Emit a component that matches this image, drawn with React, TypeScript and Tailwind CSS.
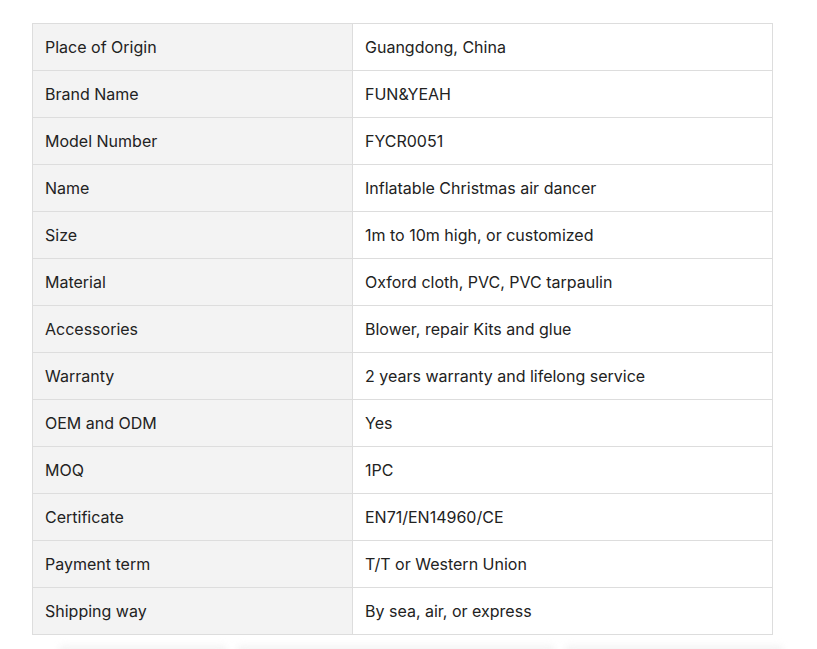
const rows: [string, string][] = [
  ["Place of Origin", "Guangdong, China"],
  ["Brand Name", "FUN&YEAH"],
  ["Model Number", "FYCR0051"],
  ["Name", "Inflatable Christmas air dancer"],
  ["Size", "1m to 10m high, or customized"],
  ["Material", "Oxford cloth, PVC, PVC tarpaulin"],
  ["Accessories", "Blower, repair Kits and glue"],
  ["Warranty", "2 years warranty and lifelong service"],
  ["OEM and ODM", "Yes"],
  ["MOQ", "1PC"],
  ["Certificate", "EN71/EN14960/CE"],
  ["Payment term", "T/T or Western Union"],
  ["Shipping way", "By sea, air, or express"],
];

export default function App() {
  return (
    <div className="h-[649px] overflow-hidden bg-white pt-[23px] font-['Inter',sans-serif] text-[16px] text-[#222]">
      <table className="ml-[32px] w-[741px] border-collapse border border-[#dddddd]">
        <tbody>
          {rows.map(([k, v]) => (
            <tr key={k} className="h-[47px]">
              <td className="w-[320px] border border-[#dddddd] bg-[#f3f3f3] px-3 align-middle">{k}</td>
              <td className="border border-[#dddddd] px-3 align-middle">{v}</td>
            </tr>
          ))}
        </tbody>
      </table>
      {/* faint shadows of the cards below */}
      <div className="mt-[10px] flex gap-[8px] pl-[58px]">
        <div className="h-[20px] w-[170px] rounded-md bg-[#f5f5f5] blur-[3px]" />
        <div className="h-[20px] w-[320px] rounded-md bg-[#f5f5f5] blur-[3px]" />
        <div className="h-[20px] w-[220px] rounded-md bg-[#f5f5f5] blur-[3px]" />
      </div>
    </div>
  );
}
